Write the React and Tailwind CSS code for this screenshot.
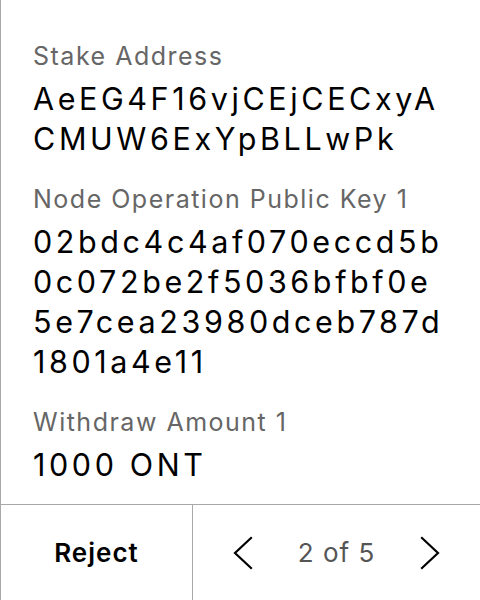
import React from 'react'

const fields = [
  { label: 'Stake Address', lines: ['AeEG4F16vjCEjCECxyA', 'CMUW6ExYpBLLwPk'] },
  {
    label: 'Node Operation Public Key 1',
    lines: ['02bdc4c4af070eccd5b', '0c072be2f5036bfbf0e', '5e7cea23980dceb787d', '1801a4e11'],
  },
  { label: 'Withdraw Amount 1', lines: ['1000 ONT'] },
]

function Chevron({ dir }) {
  const d = dir === 'left' ? 'M18 2 L2 17 L18 32' : 'M2 2 L18 17 L2 32'
  return (
    <svg width="20" height="34" viewBox="0 0 20 34" fill="none" stroke="#000" strokeWidth="2.2" strokeLinecap="square">
      <path d={d} />
    </svg>
  )
}

export default function App() {
  return (
    <div className="w-[480px] h-[600px] bg-white border-l border-[#a8a8a8] flex flex-col font-['Inter',sans-serif] text-black">
      <div className="flex-1 pt-10 pl-8 pr-2">
        {fields.map((f, i) => (
          <div key={f.label} className={i > 0 ? 'mt-6' : ''}>
            <div className="text-[25px] leading-[32px] tracking-[1.5px] text-[#666666]">{f.label}</div>
            <div className="mt-[7px] text-[30.5px] leading-[40px] tracking-[3.6px]">
              {f.lines.map((l) => (
                <div key={l} className="whitespace-nowrap">{l}</div>
              ))}
            </div>
          </div>
        ))}
      </div>
      <div className="h-[96px] border-t border-[#a8a8a8] flex">
        <button className="w-[192px] border-r border-[#a8a8a8] flex items-center justify-center text-[26px] tracking-[1px] font-semibold">
          Reject
        </button>
        <div className="flex-1 flex items-center justify-center gap-[45px]">
          <Chevron dir="left" />
          <span className="text-[26px] tracking-[1px] text-[#555555]">2 of 5</span>
          <Chevron dir="right" />
        </div>
      </div>
    </div>
  )
}
